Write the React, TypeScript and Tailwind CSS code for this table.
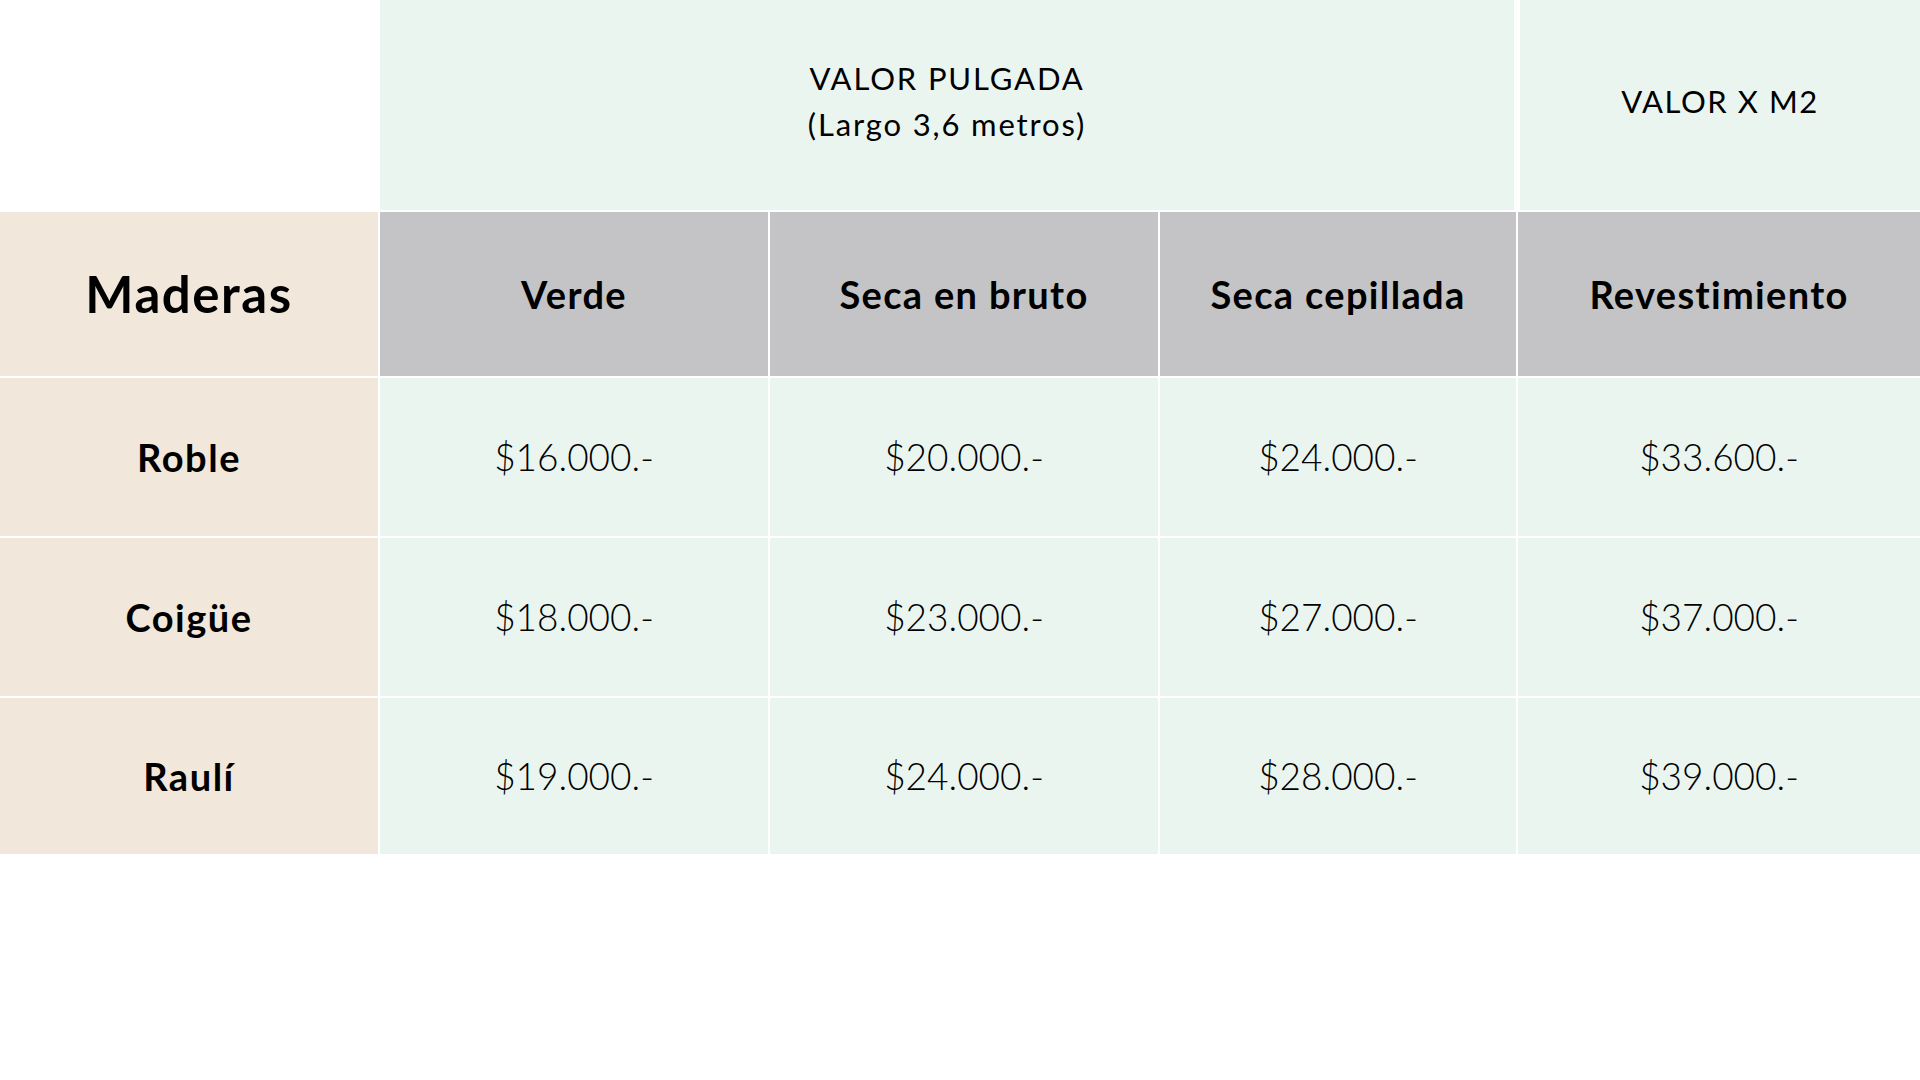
const ROWS = [
  { name: 'Roble', prices: ['$16.000.-', '$20.000.-', '$24.000.-', '$33.600.-'] },
  { name: 'Coigüe', prices: ['$18.000.-', '$23.000.-', '$27.000.-', '$37.000.-'] },
  { name: 'Raulí', prices: ['$19.000.-', '$24.000.-', '$28.000.-', '$39.000.-'] },
];

const COLUMNS = ['Verde', 'Seca en bruto', 'Seca cepillada', 'Revestimiento'];

const App = () => {
  return (
    <div className="w-[1920px] h-[1080px] bg-white text-black font-['Lato','Liberation_Sans',sans-serif]">
      {/* group headers */}
      <div className="flex h-[210px]">
        <div className="w-[380px]" />
        <div className="w-[1134px] bg-[#ebf5f0] flex flex-col items-center justify-center pb-[8px] text-[31px] leading-[46px] tracking-[0.06em]">
          <span>VALOR PULGADA</span>
          <span>(Largo 3,6 metros)</span>
        </div>
        <div className="w-[6px]" />
        <div className="flex-1 bg-[#ebf5f0] flex items-center justify-center pb-[8px] text-[31px] tracking-[0.05em]">
          VALOR X M2
        </div>
      </div>

      <div className="mt-[2px] grid grid-cols-[378px_388px_388px_356px_402px] grid-rows-[164px_158px_158px_156px] gap-[2px]">
        <div className="bg-[#f1e7da] flex items-center justify-center text-[51px] font-bold tracking-[0.03em]">
          Maderas
        </div>
        {COLUMNS.map((col) => (
          <div key={col} className="bg-[#c4c4c6] flex items-center justify-center text-[38px] font-bold tracking-[0.035em]">
            {col}
          </div>
        ))}

        {ROWS.map((row) => (
          <>
            <div key={row.name} className="bg-[#f1e7da] flex items-center justify-center text-[38px] font-bold tracking-[0.04em]">
              {row.name}
            </div>
            {row.prices.map((p, i) => (
              <div key={row.name + i} className="bg-[#ebf5f0] flex items-center justify-center text-[37px] font-light">
                {p}
              </div>
            ))}
          </>
        ))}
      </div>
    </div>
  );
};

export default App;
